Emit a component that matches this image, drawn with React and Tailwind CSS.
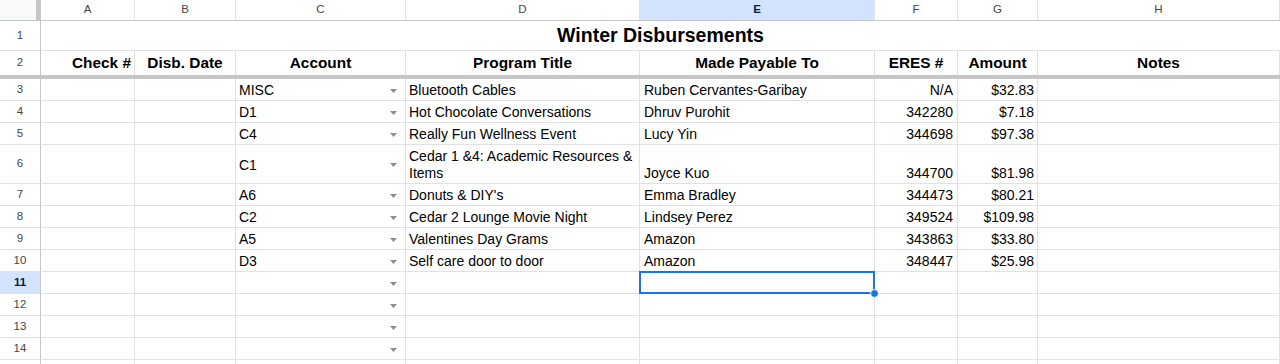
import React from 'react';

const GRID = 'grid grid-cols-[41px_94px_101px_170px_234px_235px_83px_80px_1fr]';

const letters = ['A', 'B', 'C', 'D', 'E', 'F', 'G', 'H'];

const headers = [
  { label: 'Check #', align: 'justify-end pr-[3px]' },
  { label: 'Disb. Date', align: 'justify-center' },
  { label: 'Account', align: 'justify-center' },
  { label: 'Program Title', align: 'justify-center' },
  { label: 'Made Payable To', align: 'justify-center' },
  { label: 'ERES #', align: 'justify-center' },
  { label: 'Amount', align: 'justify-center' },
  { label: 'Notes', align: 'justify-center' },
];

const rows = [
  { n: 3, account: 'MISC', title: 'Bluetooth Cables', payee: 'Ruben Cervantes-Garibay', eres: 'N/A', amount: '$32.83' },
  { n: 4, account: 'D1', title: 'Hot Chocolate Conversations', payee: 'Dhruv Purohit', eres: '342280', amount: '$7.18' },
  { n: 5, account: 'C4', title: 'Really Fun Wellness Event', payee: 'Lucy Yin', eres: '344698', amount: '$97.38' },
  { n: 6, account: 'C1', title: 'Cedar 1 &4: Academic Resources & Items', payee: 'Joyce Kuo', eres: '344700', amount: '$81.98', tall: true },
  { n: 7, account: 'A6', title: "Donuts & DIY's", payee: 'Emma Bradley', eres: '344473', amount: '$80.21' },
  { n: 8, account: 'C2', title: 'Cedar 2 Lounge Movie Night', payee: 'Lindsey Perez', eres: '349524', amount: '$109.98' },
  { n: 9, account: 'A5', title: 'Valentines Day Grams', payee: 'Amazon', eres: '343863', amount: '$33.80' },
  { n: 10, account: 'D3', title: 'Self care door to door', payee: 'Amazon', eres: '348447', amount: '$25.98' },
  { n: 11, selected: true },
  { n: 12 },
  { n: 13 },
  { n: 14 },
  { n: 15, partial: true },
];

function Arrow() {
  return (
    <svg width="7" height="4" viewBox="0 0 7 4" className="shrink-0">
      <path d="M0 0h7L3.5 4z" fill="#8a8d91" />
    </svg>
  );
}

function RowNumber({ n, active }) {
  return (
    <div
      className={
        active
          ? 'flex items-center justify-center border-r border-b border-r-[#c4c7c5] border-b-[#e1e1e1] bg-[#d3e3fd] text-[11.5px] font-bold text-[#041e49]'
          : 'flex items-center justify-center border-r border-b border-r-[#c4c7c5] border-b-[#e1e1e1] text-[11.5px] text-[#444746]'
      }
    >
      {n}
    </div>
  );
}

function Cell({ children, className = '' }) {
  return <div className={`relative flex items-end border-r border-b border-[#e1e1e1] pb-[1px] leading-[17px] ${className}`}>{children}</div>;
}

export default function App() {
  return (
    <div className="w-[1280px] h-[364px] overflow-hidden bg-white font-['Liberation_Sans',Arial,sans-serif] text-black">
      {/* column letters */}
      <div className={`${GRID} h-[21px]`}>
        <div className="flex border-b border-[#c4c7c5]">
          <div className="flex-1 bg-[#f8f9fa]" />
          <div className="w-[5px] bg-[#c4c7c5]" />
        </div>
        {letters.map((l) => (
          <div
            key={l}
            className={
              l === 'E'
                ? 'flex items-center justify-center border-r border-b border-r-[#e1e1e1] border-b-[#c4c7c5] bg-[#d3e3fd] text-[11.5px] font-bold text-[#041e49]'
                : 'flex items-center justify-center border-r border-b border-r-[#e1e1e1] border-b-[#c4c7c5] text-[11.5px] text-[#444746]'
            }
          >
            {l}
          </div>
        ))}
      </div>

      {/* row 1: merged title */}
      <div className={`${GRID} h-[30px]`}>
        <RowNumber n={1} />
        <div className="col-span-8 flex items-end justify-center border-b border-[#e1e1e1] pb-[3px] text-[19.5px] font-bold leading-[23px]">
          Winter Disbursements
        </div>
      </div>

      {/* row 2: headings */}
      <div className={`${GRID} h-[24px]`}>
        <div className="flex items-center justify-center border-r border-[#c4c7c5] text-[11.5px] text-[#444746]">2</div>
        {headers.map((h) => (
          <div key={h.label} className={`flex items-end border-r border-[#e1e1e1] pb-[3px] text-[15.4px] font-bold leading-[18px] ${h.align}`}>
            {h.label}
          </div>
        ))}
      </div>
      <div className="h-[4px] bg-[#c4c7c5]" />

      {/* data rows */}
      {rows.map((r) => (
        <div key={r.n} className={r.tall ? `${GRID} h-[39px] text-[14px]` : `${GRID} h-[22px] text-[14px]`}>
          {r.partial ? (
            <div className="border-r border-[#c4c7c5]" />
          ) : (
            <RowNumber n={r.n} active={r.selected} />
          )}
          <Cell />
          <Cell />
          <div className="flex items-center justify-between border-r border-b border-[#e1e1e1] pl-[3px] pr-[8px] pt-[2px] leading-[17px]">
            <span>{r.account}</span>
            {!r.partial && <Arrow />}
          </div>
          <Cell className="pl-[3px] pr-[3px]">{r.title}</Cell>
          <Cell className={r.selected ? 'z-10 pl-[4px]' : 'pl-[4px]'}>
            {r.payee}
            {r.selected && (
              <div className="absolute left-[-1px] top-[-1px] right-[-1px] bottom-[-1px] border-2 border-[#1a73e8]">
                <div className="absolute right-[-6px] bottom-[-6px] h-[9px] w-[9px] rounded-full border border-white bg-[#1a73e8]" />
              </div>
            )}
          </Cell>
          <Cell className="justify-end pr-[4px]">{r.eres}</Cell>
          <Cell className="justify-end pr-[3px]">{r.amount}</Cell>
          <Cell />
        </div>
      ))}
    </div>
  );
}
